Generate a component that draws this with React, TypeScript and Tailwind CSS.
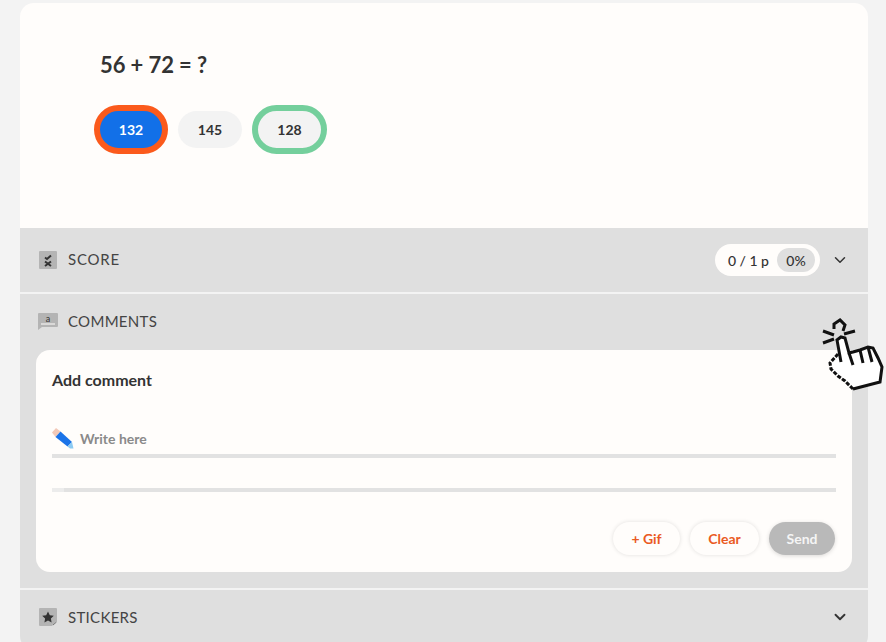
import { ChevronDown } from "lucide-react"

const font = { fontFamily: '"Lato", "Noto Sans", sans-serif' }

const ScoreIcon = () => (
    <svg width="18" height="18" viewBox="0 0 18 18">
        <rect width="18" height="18" rx="1" fill="#b4b4b4" />
        <path d="M6 6.5 L8 8 L12 4.5" fill="none" stroke="#333" strokeWidth="2" />
        <path d="M6 10.5 L12 15 M12 10.5 L6 15" fill="none" stroke="#333" strokeWidth="2" />
    </svg>
)

const CommentIcon = () => (
    <svg width="20" height="17" viewBox="0 0 20 17">
        <path d="M1 0 H19 A1 1 0 0 1 20 1 V13 A1 1 0 0 1 19 14 H4 L0 17 V1 A1 1 0 0 1 1 0 Z" fill="#b4b4b4" />
        <rect x="3" y="10.5" width="14" height="1" fill="#fffdfb" />
        <text x="10" y="9" textAnchor="middle" fontSize="9" fill="#333" fontFamily="Lato, sans-serif">a</text>
    </svg>
)

const StarIcon = () => (
    <svg width="18" height="18" viewBox="0 0 18 18">
        <path d="M1 0 H17 A1 1 0 0 1 18 1 V13 L13 18 H1 A1 1 0 0 1 0 17 V1 A1 1 0 0 1 1 0 Z" fill="#b4b4b4" />
        <path d="M9 3.5 L10.8 7.2 L14.8 7.7 L11.9 10.5 L12.6 14.5 L9 12.6 L5.4 14.5 L6.1 10.5 L3.2 7.7 L7.2 7.2 Z" fill="#333" />
        <path d="M14 17 L17.5 14" stroke="#777" strokeWidth="1" />
    </svg>
)

const PencilIcon = () => (
    <svg width="22" height="21" viewBox="0 0 22 21">
        <path d="M0 4.5 L4 0 L8.5 3.5 L3.5 9 Z" fill="#f2c9b8" />
        <path d="M3.5 9 L8.5 3.5 L20 14 L15.5 18.5 Z" fill="#1a73e8" />
        <path d="M15.5 18.5 L20 14 L21.5 20.5 L18 20.5 Z" fill="#8ccaf2" />
    </svg>
)

const HandCursor = () => (
    <svg className="absolute left-[820px] top-[316px]" width="64" height="78" viewBox="0 0 64 78">
        <path d="M14 13 L14 8 L20 4 L25 9 L23 15 M3 15 L14 19 M3 27 L14 23 M24 18 L35 15" fill="none" stroke="#111" strokeWidth="3" />
        <path
            d="M17 24 L21 21 L25 22 L29 37 L33 36 L40 34 L48 31 L53 32 L58 42 L62 51 L60 66 L33 73 L25 65 L18 60 L11 53 L10 47 L18 38 L21 46 Z"
            fill="#fff"
        />
        <path
            d="M21 46 L17 24 L21 21 L25 22 L29 37 L33 36 L40 34 L48 31 L53 32 L58 42 L62 51 L60 66 L33 73"
            fill="none"
            stroke="#111"
            strokeWidth="3"
        />
        <path d="M33 73 L25 65 L18 60 L11 53 L10 47 L18 38" fill="none" stroke="#111" strokeWidth="3" strokeDasharray="4 1.5" />
        <path d="M29 37 L33 49 M40 34 L43 47 M48 31 L52 46" stroke="#111" strokeWidth="3" fill="none" />
    </svg>
)

const App = () => {
    return (
        <div style={font} className="relative h-[642px] overflow-hidden bg-[#f3f3f3] pl-[20px] pr-[18px] pt-[3px] text-[#333]">
            <section className="h-[225px] rounded-t-[14px] bg-[#fffdfb] pl-[74px] pt-[46px]">
                <h1 className="pl-[6px] text-[22px] font-bold leading-[32px] tracking-[-0.1px] text-[#333]">56 + 72 = ?</h1>
                <div className="mt-[24px] flex items-center gap-[10px]">
                    <button className="flex h-[49px] w-[74px] items-center justify-center rounded-full border-[6px] border-[#fb5a1c] bg-[#1270e8] text-[14px] font-bold text-white">132</button>
                    <button className="flex h-[37px] w-[64px] items-center justify-center rounded-full bg-[#f3f3f3] text-[14px] font-bold">145</button>
                    <button className="flex h-[49px] w-[75px] items-center justify-center rounded-full border-[6px] border-[#74cf9c] bg-[#f3f3f3] text-[14px] font-bold">128</button>
                </div>
            </section>

            <section className="flex h-[66px] items-center border-b-2 border-[#f3f3f3] bg-[#dfdfdf] pl-[19px] pr-[19px]">
                <ScoreIcon />
                <span className="ml-[11px] mb-[2px] text-[15px] tracking-[0.8px] text-[#444]">SCORE</span>
                <div className="ml-auto flex h-[32px] items-center rounded-full bg-[#fffdfb] pl-[13px] pr-[5px] text-[14px]">
                    <span className="font-medium">0 / 1 p</span>
                    <span className="ml-[8px] flex h-[24px] w-[38px] items-center justify-center rounded-full bg-[#dfdfdf] font-medium">0%</span>
                </div>
                <ChevronDown className="ml-[11px]" size={18} strokeWidth={2} />
            </section>

            <section className="h-[296px] border-b-2 border-[#f3f3f3] bg-[#dfdfdf] px-[16px]">
                <div className="flex h-[56px] items-center pb-[1px] pl-[2px]">
                    <CommentIcon />
                    <span className="ml-[10px] text-[15px] tracking-[0.3px] text-[#444]">COMMENTS</span>
                </div>
                <div className="h-[222px] rounded-[14px] bg-[#fffdfb] px-[16px] pt-[20px]">
                    <h2 className="text-[16px] font-bold leading-[20px]">Add comment</h2>
                    <div className="mt-[36px] flex h-[24px] items-center">
                        <PencilIcon />
                        <span className="ml-[6px] text-[14px] font-bold text-[#8a8a8a]">Write here</span>
                    </div>
                    <div className="mt-[4px] h-[4px] bg-[#e2e2e2]" />
                    <div className="mt-[30px] flex h-[4px]">
                        <div className="w-[12px] bg-[#ececec]" />
                        <div className="grow bg-[#e2e2e2]" />
                    </div>
                    <div className="mt-[30px] mr-[1px] flex justify-end gap-[10px]">
                        <button className="h-[33px] w-[67px] rounded-full bg-[#fffdfb] text-[14px] font-bold text-[#ea5a23] shadow-[0_0_4px_rgba(0,0,0,0.12)]">+ Gif</button>
                        <button className="h-[33px] w-[69px] rounded-full bg-[#fffdfb] text-[14px] font-bold text-[#ea5a23] shadow-[0_0_4px_rgba(0,0,0,0.12)]">Clear</button>
                        <button className="h-[33px] w-[66px] rounded-full bg-[#b9b9b9] text-[14px] font-bold text-[#f5f5f5] shadow-[0_1px_4px_rgba(0,0,0,0.15)]">Send</button>
                    </div>
                </div>
            </section>

            <section className="flex h-[60px] items-start rounded-b-[14px] bg-[#dfdfdf] pl-[19px] pr-[19px] pt-[18px]">
                <StarIcon />
                <span className="ml-[11px] text-[15px] leading-[18px] tracking-[0.3px] text-[#444]">STICKERS</span>
                <ChevronDown className="ml-auto" size={18} strokeWidth={2.5} />
            </section>

            <HandCursor />
        </div>
    )
}

export default App
